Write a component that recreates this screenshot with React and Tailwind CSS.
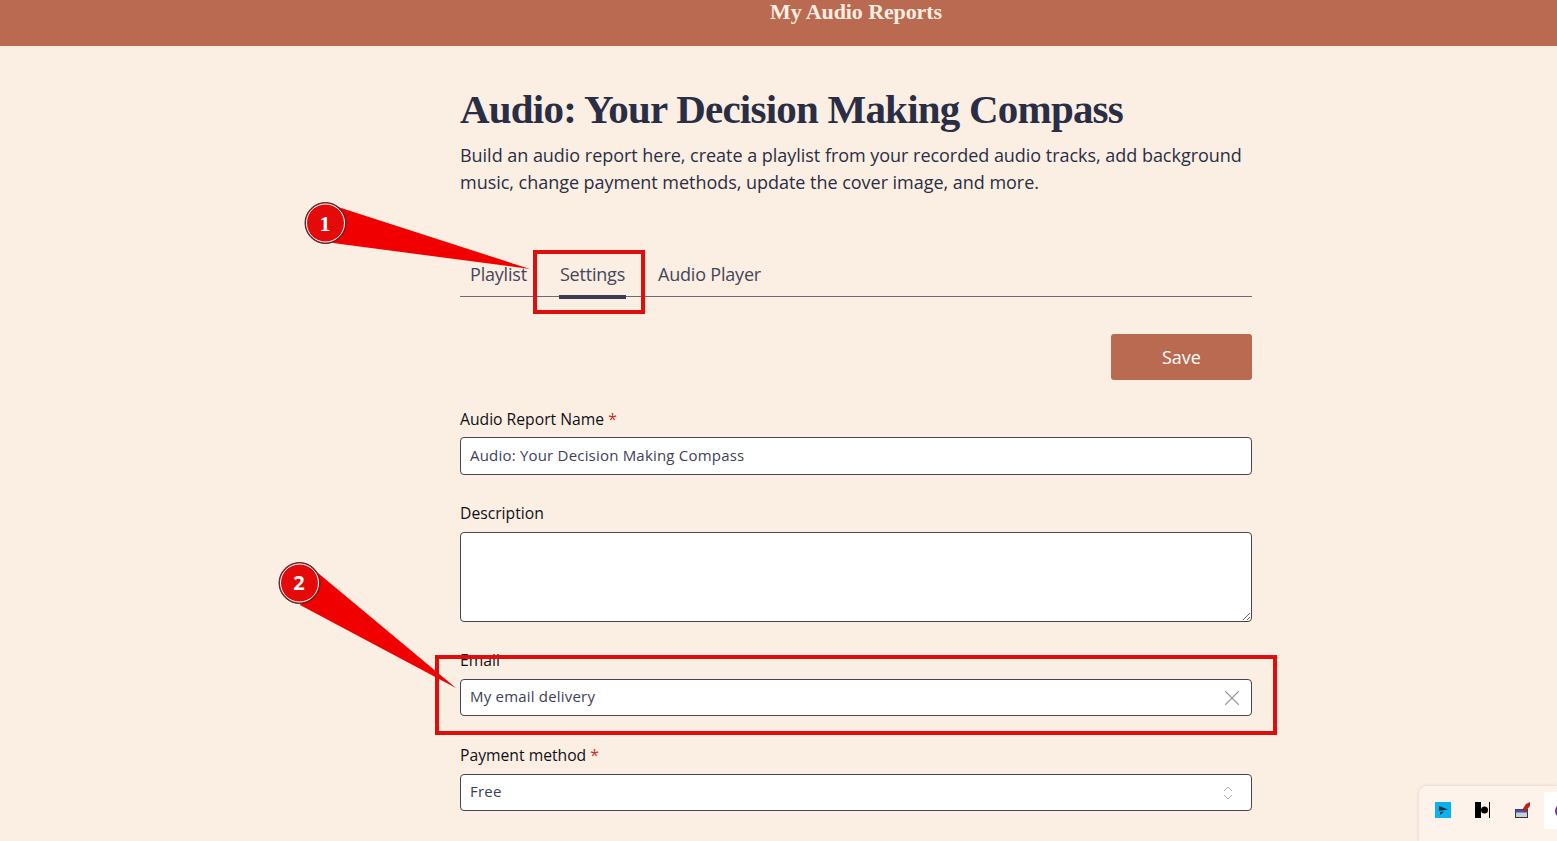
import React from "react";
import { X, ChevronsUpDown } from "lucide-react";

const sans = "font-['Open_Sans',sans-serif]";
const serif = "font-['Liberation_Serif',serif]";

const Label = ({ children, required }) => (
  <label className="block text-[15.7px] leading-[20px] font-medium text-[#0f1015]">
    {children}
    {required && <span className="text-[#d02b20]"> *</span>}
  </label>
);

// annotation marker: red pointer plus numbered circle
const Callout = () => (
  <svg className="absolute left-0 top-0 pointer-events-none" width="1557" height="841">
    <polygon points="338,207 530,269 333,243" fill="#f00000" />
    <polygon points="318,573 456,688 300,605" fill="#f00000" />
    <circle cx="325.5" cy="223" r="20.5" fill="#e40a0a" stroke="#333" strokeWidth="1" />
    <circle cx="325.5" cy="223" r="19" fill="#e40a0a" stroke="#fff" strokeWidth="1" />
    <circle cx="299.5" cy="583" r="20.5" fill="#e40a0a" stroke="#333" strokeWidth="1" />
    <circle cx="299.5" cy="583" r="19" fill="#e40a0a" stroke="#fff" strokeWidth="1" />
  </svg>
);

const Dock = () => (
  <div className="absolute right-0 bottom-0 w-[138px] h-[55px] overflow-hidden bg-[#fdf3ea] rounded-tl-[8px] shadow-[0_0_4px_rgba(0,0,0,0.12)] flex items-start pl-[16px] pt-[16px] gap-[24px]">
    <svg className="shrink-0" width="16" height="16" viewBox="0 0 16 16">
      <rect width="16" height="16" fill="#0bb1ee" />
      <path d="M4 4 L13 7.5 L4 9 Z M5 10 L9 9.5 L5 13 Z" fill="#14324a" />
    </svg>
    <svg className="shrink-0" width="16" height="16" viewBox="0 0 16 16">
      <rect x="0" y="0" width="6" height="16" fill="#000" />
      <circle cx="9.5" cy="8" r="3.5" fill="#000" />
      <rect x="14" y="0" width="1" height="16" fill="#000" />
    </svg>
    <svg className="shrink-0" width="16" height="16" viewBox="0 0 16 16">
      <rect x="0.5" y="7.5" width="12" height="8" fill="#c9d0dc" stroke="#333" />
      <rect x="0.5" y="7.5" width="12" height="3" fill="#3c55b0" />
      <path d="M7 8 L11 2 L15 0 L15 4 L10 10 Z" fill="#c0201c" />
    </svg>
    <div className="shrink-0 -ml-[11px] -mt-[10px] h-[37px] w-[13px] bg-white flex items-center pl-[11px]">
      <div className="shrink-0 w-[14px] h-[14px] rounded-full bg-[#7a22c8]" />
    </div>
  </div>
);

export default function App() {
  return (
    <div className={`${sans} relative h-[841px] overflow-hidden bg-[#fbeee3] text-[#2a2e45] flex`}>
      {/* empty left rail */}
      <div className="w-[155px] shrink-0" />

      <div className="flex-1">
        <header className="h-[46px] bg-[#b96a50] text-center -ml-[155px] pl-[155px]">
          <span className={`${serif} block text-[22px] leading-[24px] font-bold tracking-[-0.1px] text-[#fdeee2]`}>My Audio Reports</span>
        </header>

        <main className="w-[792px] mx-auto">
          <h1 className={`${serif} mt-[38px] text-[41px] leading-[50px] font-bold tracking-[-0.78px] whitespace-nowrap text-[#2a2e45]`}>
            Audio: Your Decision Making Compass
          </h1>
          <p className="mt-[8px] text-[18px] leading-[27px] tracking-[-0.03px] text-[#2a2e45]">
            Build an audio report here, create a playlist from your recorded audio tracks, add background music, change payment methods, update the cover image, and more.
          </p>

          <nav className="mt-[59px] h-[42px] border-b border-[#6b6b75] flex items-start text-[18px] leading-[27px] tracking-[-0.2px] text-[#44465a]">
            <a className="mt-[6px] ml-[10px]">Playlist</a>
            <a className="relative mt-[6px] ml-[33px]">
              Settings
              <span className="absolute -left-px -right-px top-[34px] h-[4px] bg-[#3b3b55]" />
            </a>
            <a className="mt-[6px] ml-[33px]">Audio Player</a>
          </nav>

          <div className="flex justify-end mt-[37px]">
            <button className="w-[141px] h-[46px] rounded-[3px] bg-[#b96a50] text-white text-[18px] font-medium">Save</button>
          </div>

          <div className="mt-[29px]">
            <Label required>Audio Report Name</Label>
            <div className="mt-[8px] h-[38px] bg-white border border-[#44464c] rounded-[4px] px-[9px] pb-[2px] flex items-center text-[15px] tracking-[0.2px] text-[#3d4257]">
              Audio: Your Decision Making Compass
            </div>
          </div>

          <div className="mt-[28px]">
            <Label>Description</Label>
            <textarea className="block mt-[9px] w-full h-[90px] bg-white border border-[#44464c] rounded-[4px]" />
          </div>

          <div className="mt-[28px]">
            <Label>Email</Label>
            <div className="mt-[9px] h-[37px] bg-white border border-[#44464c] rounded-[4px] pl-[9px] pr-[6px] flex items-center justify-between text-[15px] tracking-[0.2px] text-[#3d4257]">
              <span className="mb-[2px]">My email delivery</span>
              <X size={26} strokeWidth={1} className="text-[#999999]" />
            </div>
          </div>

          <div className="mt-[29px]">
            <Label required>Payment method</Label>
            <div className="mt-[9px] h-[37px] bg-white border border-[#44464c] rounded-[4px] pl-[9px] pr-[14px] flex items-center justify-between text-[15px] tracking-[0.2px] text-[#3d4257]">
              <span className="mb-[2px]">Free</span>
              <ChevronsUpDown size={18} strokeWidth={1.3} className="text-[#aaaaaa]" />
            </div>
          </div>
        </main>
      </div>

      <Callout />
      <div className={`${serif} absolute left-[305px] top-[203px] w-[40px] h-[40px] flex items-center justify-center text-white font-bold text-[22px]`}>1</div>
      <div className="absolute left-[279px] top-[563px] w-[40px] h-[40px] flex items-center justify-center text-white font-bold text-[20px]">2</div>

      {/* red highlight boxes */}
      <div className="absolute left-[533px] top-[250px] w-[112px] h-[64px] border-[4px] border-[#e00d0d]" />
      <div className="absolute left-[435px] top-[655px] w-[842px] h-[80px] border-[4px] border-[#e00d0d]" />

      <Dock />
    </div>
  );
}
